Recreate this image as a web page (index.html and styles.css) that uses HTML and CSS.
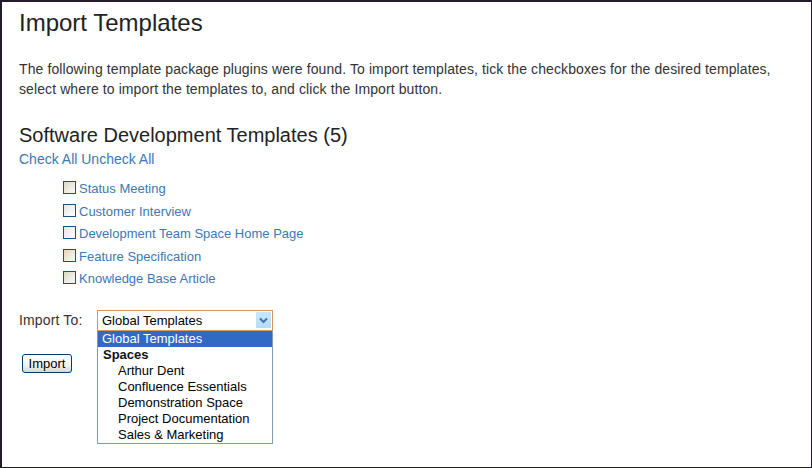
FILE: index.html
```html
<!DOCTYPE html>
<html>
<head>
<meta charset="utf-8">
<link rel="stylesheet" href="styles.css">
</head>
<body>
<div class="page">
  <h1 class="title">Import Templates</h1>
  <p class="intro">The following template package plugins were found. To import templates, tick the checkboxes for the desired templates, select where to import the templates to, and click the Import button.</p>
  <h2 class="group-title">Software Development Templates (5)</h2>
  <div class="check-links"><a href="#">Check All</a> <a href="#">Uncheck All</a></div>
  <ul class="tpl-list">
    <li class="tpl"><span class="cb"></span><a href="#">Status Meeting</a></li>
    <li class="tpl"><span class="cb cb-light"></span><a href="#">Customer Interview</a></li>
    <li class="tpl"><span class="cb cb-light"></span><a href="#">Development Team Space Home Page</a></li>
    <li class="tpl"><span class="cb"></span><a href="#">Feature Specification</a></li>
    <li class="tpl"><span class="cb"></span><a href="#">Knowledge Base Article</a></li>
  </ul>
  <div class="import-row">
    <span class="import-label">Import To:</span>
    <div class="select">
      <span class="select-value">Global Templates</span>
      <span class="select-arrow">
        <svg width="15" height="16" viewBox="0 0 15 16"><path d="M4 6.5 L7.5 10 L11 6.5" fill="none" stroke="#4a6fb5" stroke-width="2"/></svg>
      </span>
      <div class="dropdown">
        <div class="opt opt-selected">Global Templates</div>
        <div class="opt opt-group">Spaces</div>
        <div class="opt opt-sub">Arthur Dent</div>
        <div class="opt opt-sub">Confluence Essentials</div>
        <div class="opt opt-sub">Demonstration Space</div>
        <div class="opt opt-sub">Project Documentation</div>
        <div class="opt opt-sub">Sales &amp; Marketing</div>
      </div>
    </div>
  </div>
  <div class="btn-row"><button class="btn">Import</button></div>
</div>
</body>
</html>
```

FILE: styles.css
```css
html, body {
  margin: 0;
  padding: 0;
  background: #fff;
}
.page {
  box-sizing: border-box;
  width: 812px;
  height: 468px;
  border: 2px solid #221a2a;
  border-right-width: 1px;
  border-bottom-width: 1px;
  padding: 0 0 0 17px;
  font-family: "Liberation Sans", Arial, sans-serif;
  color: #333;
  overflow: hidden;
}
.title {
  margin: 7px 0 0;
  font-size: 24px;
  line-height: 28px;
  font-weight: normal;
  color: #222;
}
.intro {
  margin: 22px 0 0;
  font-size: 14px;
  letter-spacing: 0.1px;
  line-height: 20px;
  width: 770px;
}
.group-title {
  margin: 24px 0 0;
  font-size: 20px;
  line-height: 24px;
  font-weight: normal;
  color: #222;
}
.check-links {
  margin-top: 2px;
  font-size: 14px;
  line-height: 20px;
}
a {
  color: #3c78b5;
  text-decoration: none;
}
.tpl-list {
  list-style: none;
  margin: 9px 0 0;
  padding: 0 0 0 44px;
}
.tpl {
  display: flex;
  align-items: baseline;
  height: 22.5px;
  line-height: 22.5px;
  font-size: 13px;
}
.cb {
  box-sizing: border-box;
  width: 13px;
  height: 13px;
  border: 1px solid #1c5180;
  background: linear-gradient(135deg, #dcd8c4 0%, #ece9dc 50%, #fbfaf4 100%);
  margin-right: 3px;
  position: relative;
  top: 1px;
}
.cb-light {
  background: linear-gradient(135deg, #e6e6e0 0%, #f2f2ee 50%, #ffffff 100%);
}
.import-row {
  display: flex;
  align-items: baseline;
  margin-top: 19px;
  font-size: 14px;
}
.import-label {
  width: 78px;
  line-height: 20px;
  letter-spacing: 0.15px;
}
.select {
  position: relative;
  box-sizing: border-box;
  width: 176px;
  height: 21px;
  border: 1px solid #d9965a;
  display: flex;
  align-items: center;
  color: #000;
  font-size: 13px;
  line-height: 19px;
}
.select-value {
  flex: 1;
  padding-left: 4px;
}
.select-arrow {
  width: 15px;
  height: 16px;
  margin-right: 1px;
  background: linear-gradient(180deg, #c8e9fc 0%, #b4dcf6 100%);
  display: flex;
}
.dropdown {
  position: absolute;
  left: -1px;
  top: 20px;
  box-sizing: border-box;
  width: 176px;
  border: 1px solid #7f9db9;
  border-top-width: 0;
  background: #fff;
}
.opt {
  height: 16px;
  line-height: 16px;
  padding-left: 4px;
  color: #000;
  white-space: nowrap;
}
.opt-selected {
  background: #316ac5;
  color: #fff;
}
.opt-group {
  font-weight: bold;
  padding-left: 5px;
  color: #111;
}
.opt-sub {
  padding-left: 20px;
}
.btn-row {
  margin-top: 23px;
  padding-left: 3px;
}
.btn {
  box-sizing: border-box;
  width: 50px;
  height: 19px;
  padding: 0;
  border: 1px solid #003c74;
  border-radius: 3px;
  background: linear-gradient(180deg, #ffffff 0%, #f4f3ee 60%, #dcd8c8 100%);
  font-family: "Liberation Sans", Arial, sans-serif;
  font-size: 13px;
  color: #000;
  line-height: 17px;
}
```
